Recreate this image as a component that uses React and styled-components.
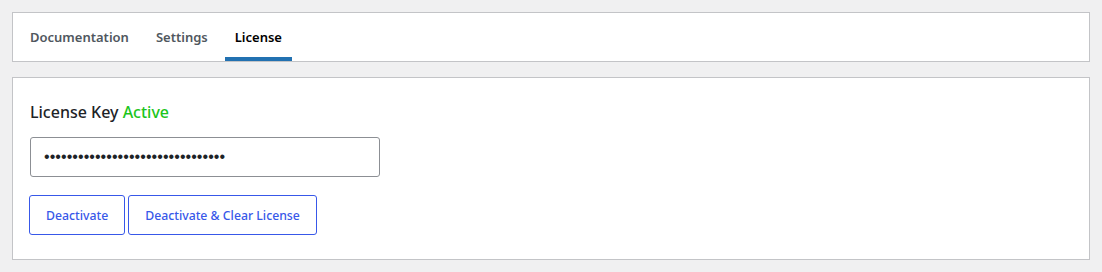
import React, { useState } from "react";
import styled, { createGlobalStyle } from "styled-components";

const GlobalStyle = createGlobalStyle`
    body {
        margin: 0;
        background: #f0f0f1;
        font-family: 'Noto Sans', 'Liberation Sans', sans-serif;
        color: #1d2327;
    }
`

const tabs = ["Documentation", "Settings", "License"];

const App = () => {
    const [active, setActive] = useState("License");

    return (
        <>
            <GlobalStyle />
            <Page>
                <TabBar>
                    {tabs.map((t) =>
                        <Tab key={t} $active={t === active} onClick={() => setActive(t)}>{t}</Tab>
                    )}
                </TabBar>
                <Card>
                    <Title>License Key <Status>Active</Status></Title>
                    <KeyInput type="password" defaultValue="xxxxxxxxxxxxxxxxxxxxxxxxxxxxxxxx" readOnly />
                    <Actions>
                        <Button>Deactivate</Button>
                        <Button>Deactivate &amp; Clear License</Button>
                    </Actions>
                </Card>
            </Page>
        </>
    )
}

const Page = styled.div`
    padding: 12px;
    display: flex;
    flex-direction: column;
    gap: 15px;
`

const TabBar = styled.nav`
    height: 48px;
    display: flex;
    align-items: stretch;
    gap: 7px;
    padding: 0 7px;
    background: #fff;
    border: 1px solid #c3c4c7;
`

const Tab = styled.div`
    display: flex;
    align-items: center;
    padding: 4px 10px 0;
    font-size: 13px;
    font-weight: 600;
    color: ${p => p.$active ? "#000" : "#50575e"};
    border-bottom: 4px solid ${p => p.$active ? "#2271b1" : "transparent"};
    cursor: pointer;
`

const Card = styled.section`
    background: #fff;
    border: 1px solid #c3c4c7;
    padding: 23px 17px 24px;
    display: flex;
    flex-direction: column;
    align-items: flex-start;
`

const Title = styled.h2`
    margin: 0 0 14px;
    font-size: 16px;
    font-weight: 500;
    line-height: 22px;
    color: #1d2327;
`

const Status = styled.span`
    color: #1cc51c;
`

const KeyInput = styled.input`
    box-sizing: border-box;
    width: 350px;
    height: 40px;
    margin: 0 0 18px;
    padding: 0 13px;
    border: 1px solid #8c8f94;
    border-radius: 3px;
    font-size: 16px;
    color: #1d2327;
    letter-spacing: 0.06px;
    outline: none;
`

const Actions = styled.div`
    display: flex;
    gap: 3px;
    margin-left: -1px;
`

const Button = styled.button`
    height: 40px;
    padding: 0 16px;
    background: #fff;
    border: 1px solid #3858e9;
    border-radius: 3px;
    color: #3858e9;
    font-family: 'Noto Sans', 'Liberation Sans', sans-serif;
    font-size: 12.25px;
    font-weight: 500;
    cursor: pointer;
`

export default App;
